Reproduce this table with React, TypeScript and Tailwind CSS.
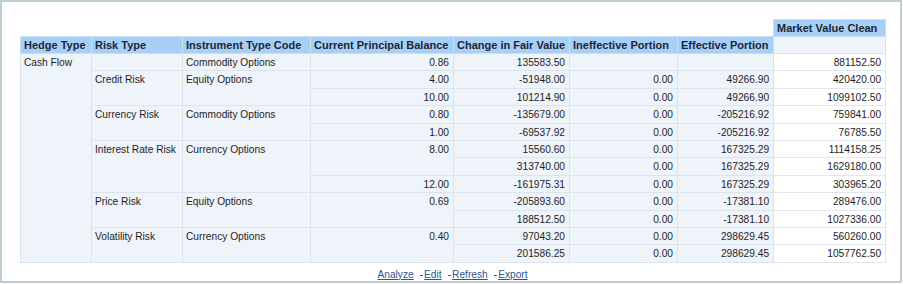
type Cell = {
  v: string;
  rs?: number;
  num?: boolean;
  mv?: boolean;
};

const td = "border border-[#dbe3ed] bg-[#eff3fa] px-[3px] pt-[2px] align-top";
const tdNum = "border border-[#dbe3ed] bg-[#eff3fa] pl-[3px] pr-[4px] pt-[2px] align-top text-right";
const tdMv = "border border-[#e1e7ee] bg-white pl-[3px] pr-[4px] pt-[2px] align-top text-right";
const th = "border border-[#c9dff5] bg-[#a8cff6] px-[3px] text-left font-bold text-[11px] text-[#1c2636] whitespace-nowrap";

const rows: Cell[][] = [
  [
    { v: "Cash Flow", rs: 12 },
    { v: "" },
    { v: "Commodity Options" },
    { v: "0.86", num: true },
    { v: "135583.50", num: true },
    { v: "", num: true },
    { v: "", num: true },
    { v: "881152.50", mv: true },
  ],
  [
    { v: "Credit Risk", rs: 2 },
    { v: "Equity Options", rs: 2 },
    { v: "4.00", num: true },
    { v: "-51948.00", num: true },
    { v: "0.00", num: true },
    { v: "49266.90", num: true },
    { v: "420420.00", mv: true },
  ],
  [
    { v: "10.00", num: true },
    { v: "101214.90", num: true },
    { v: "0.00", num: true },
    { v: "49266.90", num: true },
    { v: "1099102.50", mv: true },
  ],
  [
    { v: "Currency Risk", rs: 2 },
    { v: "Commodity Options", rs: 2 },
    { v: "0.80", num: true },
    { v: "-135679.00", num: true },
    { v: "0.00", num: true },
    { v: "-205216.92", num: true },
    { v: "759841.00", mv: true },
  ],
  [
    { v: "1.00", num: true },
    { v: "-69537.92", num: true },
    { v: "0.00", num: true },
    { v: "-205216.92", num: true },
    { v: "76785.50", mv: true },
  ],
  [
    { v: "Interest Rate Risk", rs: 3 },
    { v: "Currency Options", rs: 3 },
    { v: "8.00", rs: 2, num: true },
    { v: "15560.60", num: true },
    { v: "0.00", num: true },
    { v: "167325.29", num: true },
    { v: "1114158.25", mv: true },
  ],
  [
    { v: "313740.00", num: true },
    { v: "0.00", num: true },
    { v: "167325.29", num: true },
    { v: "1629180.00", mv: true },
  ],
  [
    { v: "12.00", num: true },
    { v: "-161975.31", num: true },
    { v: "0.00", num: true },
    { v: "167325.29", num: true },
    { v: "303965.20", mv: true },
  ],
  [
    { v: "Price Risk", rs: 2 },
    { v: "Equity Options", rs: 2 },
    { v: "0.69", rs: 2, num: true },
    { v: "-205893.60", num: true },
    { v: "0.00", num: true },
    { v: "-17381.10", num: true },
    { v: "289476.00", mv: true },
  ],
  [
    { v: "188512.50", num: true },
    { v: "0.00", num: true },
    { v: "-17381.10", num: true },
    { v: "1027336.00", mv: true },
  ],
  [
    { v: "Volatility Risk", rs: 2 },
    { v: "Currency Options", rs: 2 },
    { v: "0.40", rs: 2, num: true },
    { v: "97043.20", num: true },
    { v: "0.00", num: true },
    { v: "298629.45", num: true },
    { v: "560260.00", mv: true },
  ],
  [
    { v: "201586.25", num: true },
    { v: "0.00", num: true },
    { v: "298629.45", num: true },
    { v: "1057762.50", mv: true },
  ],
];

const headers = [
  "Hedge Type",
  "Risk Type",
  "Instrument Type Code",
  "Current Principal Balance",
  "Change in Fair Value",
  "Ineffective Portion",
  "Effective Portion",
];

const widths = [71, 91, 128, 143, 116, 108, 96, 112];

const links = ["Analyze", "Edit", "Refresh", "Export"];

export default function App() {
  return (
    <div
      className="w-[902px] h-[283px] border-2 border-[#bccdd5] bg-white text-[10.2px] leading-[13px] text-[#1e1e1e]"
      style={{ fontFamily: '"Liberation Sans", Arial, sans-serif' }}
    >
      <div className="pl-[18px] pt-[17px]">
        <table className="table-fixed border-collapse w-[865px]">
          <colgroup>
            {widths.map((w, i) => (
              <col key={i} style={{ width: w }} />
            ))}
          </colgroup>
          <tbody>
            <tr className="h-[17px]">
              <td colSpan={7} />
              <th className={th}>Market Value Clean</th>
            </tr>
            <tr className="h-[17px]">
              {headers.map((h) => (
                <th key={h} className={th}>
                  {h}
                </th>
              ))}
              <td className="border border-[#dbe3ed] bg-[#eff3fa]" />
            </tr>
            {rows.map((r, i) => (
              <tr key={i} className="h-[17.4px]">
                {r.map((c, j) => (
                  <td
                    key={j}
                    rowSpan={c.rs}
                    className={c.mv ? tdMv : c.num ? tdNum : td}
                  >
                    {c.v}
                  </td>
                ))}
              </tr>
            ))}
          </tbody>
        </table>
        <div className="w-[865px] mt-[5px] flex justify-center">
          {links.map((l, i) => (
            <span key={l} className="flex">
              {i > 0 && <span className="ml-[6px] mr-[1px]">-</span>}
              <a href="#" className="text-[#2d5596] underline">
                {l}
              </a>
            </span>
          ))}
        </div>
      </div>
    </div>
  );
}
